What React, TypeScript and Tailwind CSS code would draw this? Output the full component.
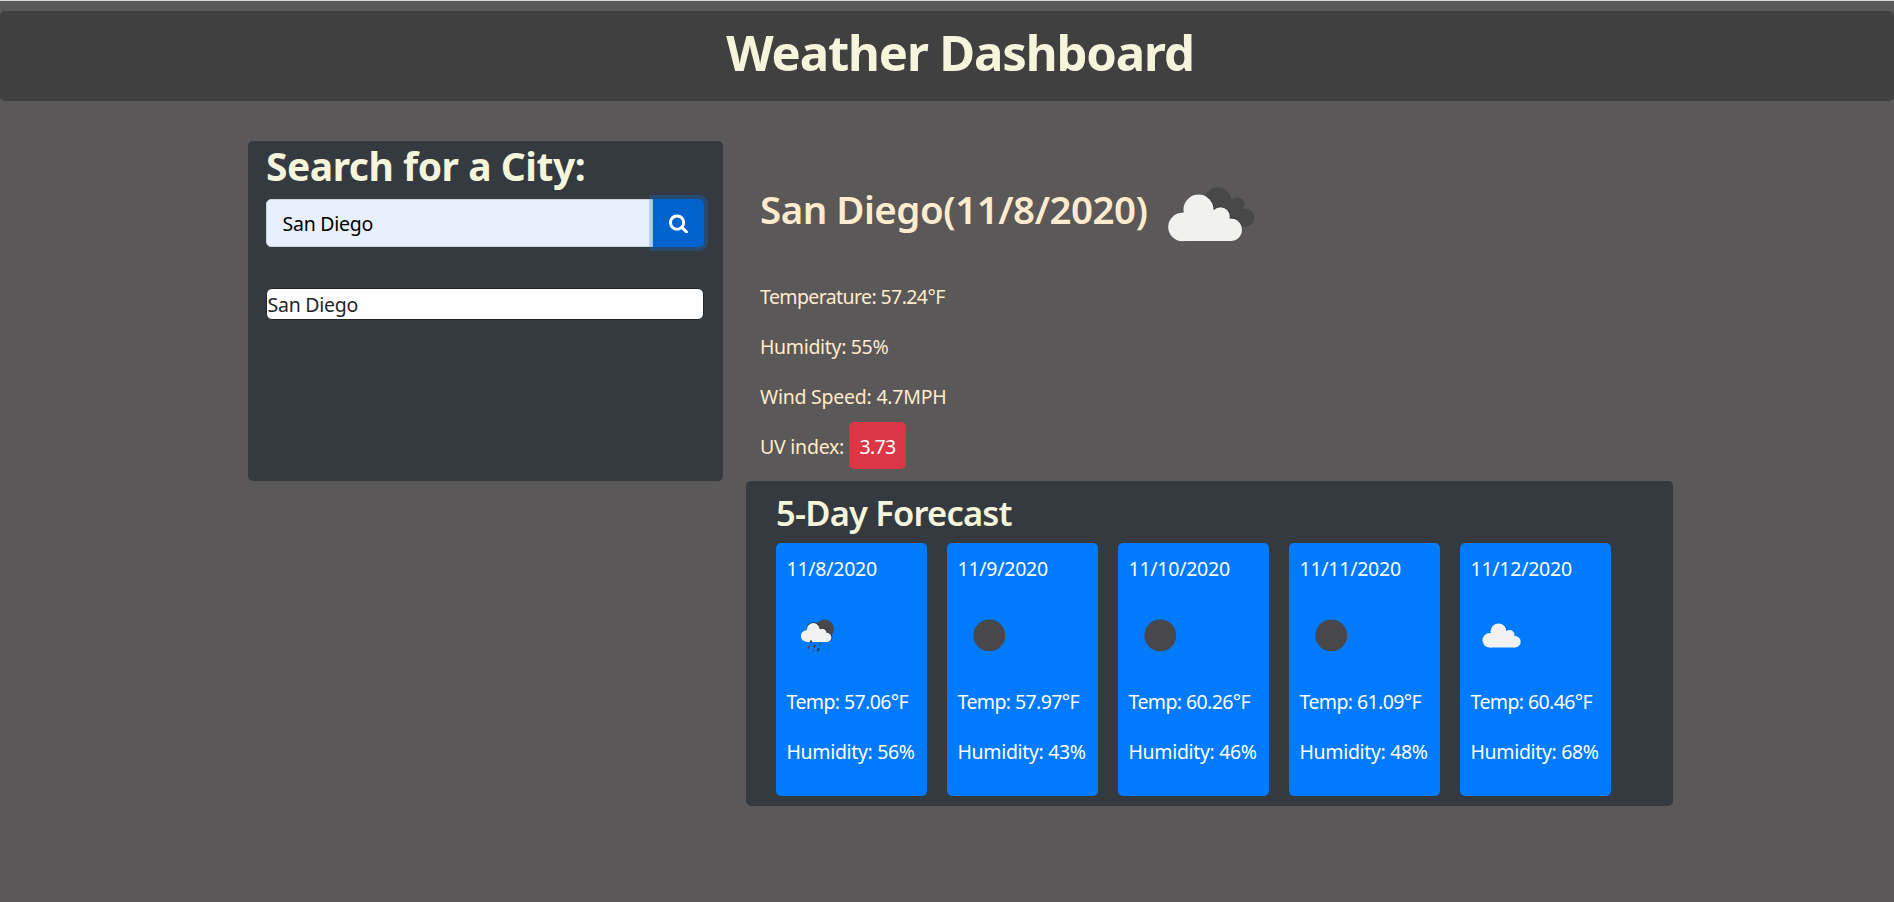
type IconName = "rain" | "moon" | "cloud";

type Day = { date: string; icon: IconName; temp: string; humidity: string };

const days: Day[] = [
  { date: "11/8/2020", icon: "rain", temp: "57.06", humidity: "56" },
  { date: "11/9/2020", icon: "moon", temp: "57.97", humidity: "43" },
  { date: "11/10/2020", icon: "moon", temp: "60.26", humidity: "46" },
  { date: "11/11/2020", icon: "moon", temp: "61.09", humidity: "48" },
  { date: "11/12/2020", icon: "cloud", temp: "60.46", humidity: "68" },
];

function SearchIcon() {
  return (
    <svg viewBox="0 0 1792 1792" className="block h-[20.5px] w-[20.5px]" fill="#fff" aria-hidden="true">
      <path d="M1152 832q0-185-131.500-316.500t-316.500-131.500-316.500 131.500-131.500 316.500 131.500 316.500 316.500 131.500 316.500-131.500 131.500-316.500zm512 832q0 52-38 90t-90 38q-54 0-90-38l-343-342q-179 124-399 124-143 0-273.500-55.500t-225-150-150-225-55.500-273.500 55.500-273.500 150-225 225-150 273.500-55.500 273.500 55.500 225 150 150 225 55.500 273.500q0 220-124 399l343 343q37 37 37 90z" />
    </svg>
  );
}

function BrokenClouds() {
  return (
    <svg viewBox="0 0 125 125" className="block h-[125px] w-[125px]" aria-hidden="true">
      <g fill="#484849">
        <circle cx="69" cy="51.500" r="13.200" />
        <circle cx="88" cy="55.500" r="7.300" />
        <circle cx="96.500" cy="68.500" r="9" />
        <path d="M60 50h30l8 27.500H78z" />
      </g>
      <g fill="#2f2f30" opacity="0.6">
        <circle cx="50.200" cy="60.500" r="15.300" />
        <circle cx="72" cy="67.200" r="9.600" />
        <circle cx="81.800" cy="80" r="11.700" />
      </g>
      <g fill="#f1f1f0">
        <circle cx="49.500" cy="60.500" r="15" />
        <circle cx="33.500" cy="78" r="14.300" />
        <circle cx="71.500" cy="67.500" r="9.300" />
        <circle cx="81.700" cy="80.700" r="11.300" />
        <path d="M33 64l16-6 22 4 9 12 2 18H33z" />
      </g>
    </svg>
  );
}

function ForecastIcon({ name }: { name: IconName }) {
  return (
    <svg viewBox="0 0 62.500 62.500" className="block h-[62.5px] w-[62.5px]" aria-hidden="true">
      {name === "moon" && <circle cx="31.300" cy="31.400" r="15.900" fill="#48484a" />}
      {name === "cloud" && (
        <g fill="#f2f2f2">
          <circle cx="27.500" cy="27.300" r="7.900" />
          <circle cx="18.700" cy="36.300" r="7.200" />
          <circle cx="38.500" cy="31" r="5" />
          <circle cx="44" cy="37.800" r="5.700" />
          <path d="M18 30l10-4 11 2 5 6v9.500H18.700z" />
        </g>
      )}
      {name === "rain" && (
        <g>
          <circle cx="37.600" cy="25" r="9.400" fill="#48484a" />
          <g fill="#2e3033">
            <circle cx="26.500" cy="25.200" r="6.900" />
            <circle cx="35.600" cy="28.600" r="4.600" />
            <circle cx="40.300" cy="33.300" r="5" />
          </g>
          <g fill="#f2f2f2">
            <circle cx="26.300" cy="25.500" r="6.400" />
            <circle cx="19.600" cy="32" r="5.800" />
            <circle cx="35.300" cy="29" r="4.200" />
            <circle cx="39.800" cy="33.400" r="4.600" />
            <path d="M19 27l8-3 8 2 5 5v7H19.600z" />
          </g>
          <g stroke="#484f58" strokeWidth="1.900" strokeLinecap="round">
            <path d="M24 37.300v.8" stroke="#2e3033" />
            <path d="M22.200 42.500l-.8 1.400" />
            <path d="M27.800 41.500l-.8 1.500" stroke="#333" />
            <path d="M33.300 39.500l-.4 1.200" strokeWidth="1.500" />
            <path d="M26.300 46l-.4.800" strokeWidth="1.500" />
            <path d="M31.700 45l-.8 1.500" stroke="#333" />
          </g>
        </g>
      )}
    </svg>
  );
}

function ForecastCard({ day }: { day: Day }) {
  return (
    <article className="h-[253px] w-[151px] whitespace-nowrap rounded-[5px] bg-[#007bff] pl-[10.5px] pt-[11px] text-white">
      <p className="tracking-[-0.24px]">{day.date}</p>
      <div className="mt-[19.5px] pl-[0.5px]">
        <ForecastIcon name={day.icon} />
      </div>
      <p className="mt-[21px] tracking-[-0.6px]">Temp: {day.temp}°F</p>
      <p className="mt-5 tracking-[-0.34px]">Humidity: {day.humidity}%</p>
    </article>
  );
}

export default function App() {
  return (
    <div className="h-[902px] overflow-hidden border-t border-[#d5dcdf] bg-[#5a5858] pt-[10px] font-['Noto_Sans',sans-serif] text-[19.5px] leading-[30px] text-[#212529]">
      <header className="h-[90px] rounded-[5px] bg-[#404040] pl-[26px] pt-[11px] text-center">
        <h1 className="text-[49px] font-bold leading-[60px] tracking-[-1.12px] text-[#f5f5dc]">Weather Dashboard</h1>
      </header>

      <main className="ml-[248px] mt-10 flex items-start gap-[23px]">
        <aside className="h-[340px] w-[475px] rounded-[5px] bg-[#343a40] px-[18px] pt-px">
          <h2 className="whitespace-nowrap text-[39px] font-bold leading-12 tracking-[-0.48px] text-[#f5f5dc]">
            Search for a City:
          </h2>
          <form className="mt-[9px] flex h-12" onSubmit={(e) => e.preventDefault()}>
            <input
              type="text"
              defaultValue="San Diego"
              aria-label="City"
              className="h-12 w-[387px] rounded-l-[5px] border border-[#ced4da] bg-[#e8f0fe] pl-[15.5px] tracking-[-0.26px] text-black outline-none"
            />
            <button
              type="submit"
              aria-label="Search"
              className="flex h-12 w-[51px] items-center justify-center rounded-r-[5px] bg-[#0062cc] pl-[2px] shadow-[0_0_0_4px_rgba(0,123,255,0.25)]"
            >
              <SearchIcon />
            </button>
          </form>
          <ul className="mt-[41px]">
            <li className="h-8 w-[438px] rounded-[6px] border border-[#212529] bg-white pl-[0.5px] pt-px leading-[30px] tracking-[-0.26px]">
              San Diego
            </li>
          </ul>
        </aside>

        <div className="w-[927px]">
          <section className="h-[340px] whitespace-nowrap pl-[14px] text-[#ffebcd]">
            <div className="flex h-[125px] items-start pt-2">
              <h2 className="mt-9 w-[389px] text-[38.5px] font-semibold leading-12 tracking-[-0.5px]">
                San Diego(11/8/2020)
              </h2>
              <BrokenClouds />
            </div>
            <p className="mt-4 tracking-[-0.6px]">Temperature: 57.24°F</p>
            <p className="mt-5 tracking-[-0.33px]">Humidity: 55%</p>
            <p className="mt-5 tracking-[-0.24px]">Wind Speed: 4.7MPH</p>
            <div className="mt-[10px] flex h-[47px] gap-[5px]">
              <span className="w-[84px] pt-[10px] tracking-[-0.24px]">UV index:</span>
              <span className="w-[57px] rounded-[5px] bg-[#dc3545] pt-[10px] text-center tracking-[-0.7px] text-white">
                3.73
              </span>
            </div>
          </section>

          <section className="h-[325px] rounded-[5px] bg-[#343a40] pl-[30px] pt-[11px]">
            <h3 className="text-[34.5px] font-semibold leading-[42px] tracking-[-0.8px] text-[#f5f5dc]">5-Day Forecast</h3>
            <div className="mt-[9px] flex gap-5">
              {days.map((day) => (
                <ForecastCard key={day.date} day={day} />
              ))}
            </div>
          </section>
        </div>
      </main>
    </div>
  );
}
